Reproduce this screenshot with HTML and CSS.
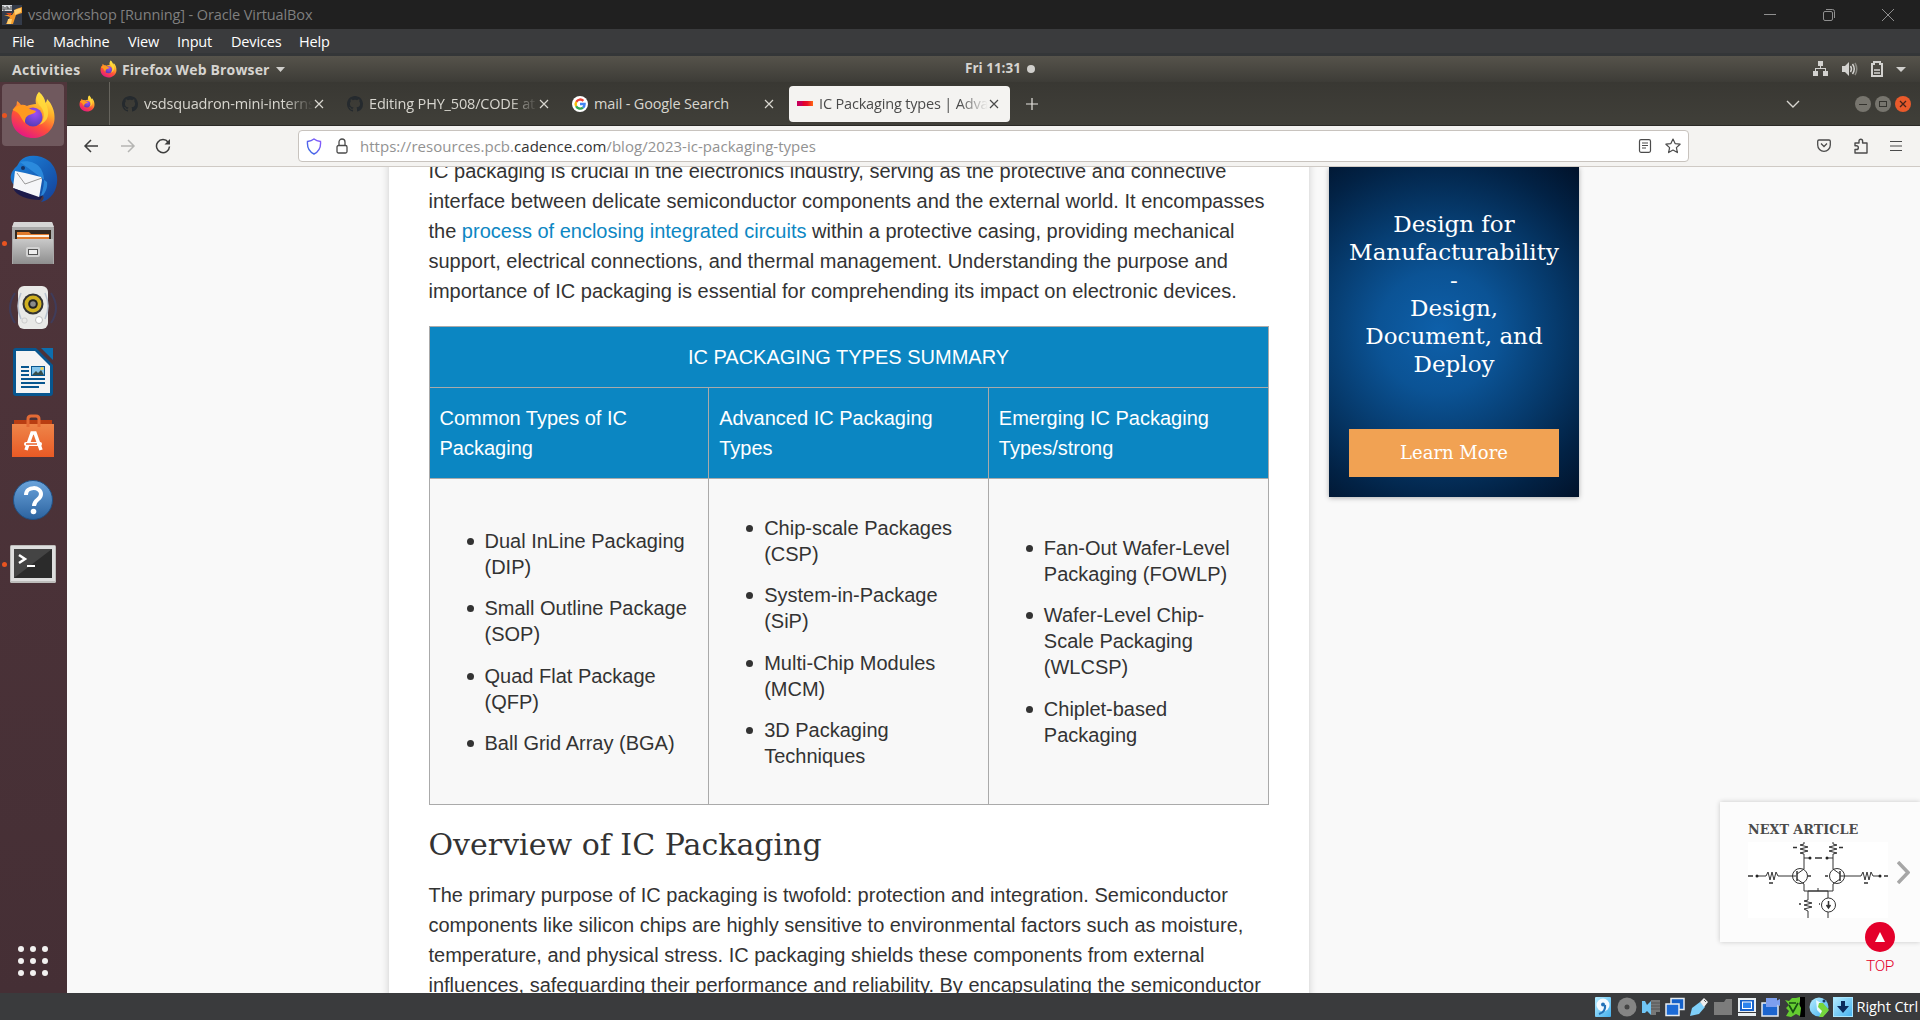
FILE: index.html
```html
<!DOCTYPE html>
<html lang="en">
<head>
<meta charset="utf-8">
<title>vsdworkshop [Running] - Oracle VirtualBox</title>
<link rel="stylesheet" href="styles.css">
</head>
<body>
<svg width="0" height="0" class="defs" aria-hidden="true">
  <defs>
    <linearGradient id="fxBody" x1=".8" y1="0" x2=".3" y2="1"><stop offset="0" stop-color="#fff44f"/><stop offset=".35" stop-color="#ffb02a"/><stop offset=".65" stop-color="#ff5138"/><stop offset="1" stop-color="#e31587"/></linearGradient>
    <radialGradient id="fxGlobe" cx=".6" cy=".3" r=".8"><stop offset="0" stop-color="#a14df5"/><stop offset="1" stop-color="#4a3bb0"/></radialGradient>
    <linearGradient id="tb" x1="0" y1="0" x2="1" y2="1"><stop offset="0" stop-color="#1b87e0"/><stop offset="1" stop-color="#143f96"/></linearGradient>
    <linearGradient id="grey" x1="0" y1="0" x2="0" y2="1"><stop offset="0" stop-color="#c9c9c9"/><stop offset="1" stop-color="#8e8e8e"/></linearGradient>
    <linearGradient id="bag" x1="0" y1="0" x2="0" y2="1"><stop offset="0" stop-color="#ee8549"/><stop offset="1" stop-color="#e95a25"/></linearGradient>
    <linearGradient id="helpg" x1="0" y1="0" x2="0" y2="1"><stop offset="0" stop-color="#6ba4dc"/><stop offset="1" stop-color="#2c639f"/></linearGradient>
    <linearGradient id="cad" x1="0" y1="0" x2="1" y2="0"><stop offset="0" stop-color="#c8005a"/><stop offset=".3" stop-color="#c8005a"/><stop offset=".4" stop-color="#e3002b"/><stop offset=".65" stop-color="#e8102a"/><stop offset="1" stop-color="#ff6a13"/></linearGradient>
    <linearGradient id="shield" x1="0" y1="1" x2="1" y2="0"><stop offset="0" stop-color="#2f6ae0"/><stop offset="1" stop-color="#9059ff"/></linearGradient>
    <linearGradient id="sky" x1="0" y1="0" x2="1" y2="1"><stop offset="0" stop-color="#b5ecff"/><stop offset="1" stop-color="#44b0ee"/></linearGradient>
    <symbol id="firefox" viewBox="0 0 46 48">
      <path d="M29 1c4 3 6 7 6.500 11 1-1 1.500-3 1.500-4 5 5 8 12 7.500 20C44 39 34.500 47 23 47S1.500 38.500 1.500 27c0-6 2-10 5-13l.5-4c2 1 3 3 4 4 2-.5 4 0 6 1 2-1 6-2 9-2-1-4 0-9 3-12z" fill="url(#fxBody)"/>
      <circle cx="23" cy="26" r="9.500" fill="url(#fxGlobe)"/>
      <path d="M2.500 19C6 14 12 13 17 16c2 2 6 3 9 4-1 3-5 3-7 4-4 2-4 5-4 8-5-5-4-10-12.500-13z" fill="#ff9a1f"/>
      <path d="M29 1c-4 6-2 11 2 15 4 5 4 13-2 18 10-3 11-13 7-21-2-4-5-8-7-12z" fill="#ffdc3c" opacity=".8"/>
    </symbol>
    <symbol id="github" viewBox="0 0 16 16"><path fill="#252a2e" d="M8 0C3.580 0 0 3.580 0 8c0 3.540 2.290 6.530 5.470 7.590.4.070.55-.17.550-.38 0-.19-.010-.82-.010-1.490-2.010.37-2.530-.49-2.690-.94-.09-.23-.48-.94-.82-1.130-.28-.15-.68-.52-.010-.53.630-.010 1.080.58 1.230.82.720 1.210 1.870.87 2.330.66.070-.52.280-.87.510-1.070-1.780-.2-3.640-.89-3.640-3.950 0-.87.310-1.590.820-2.150-.08-.2-.36-1.020.080-2.120 0 0 .67-.21 2.200.82.640-.18 1.320-.27 2-.27s1.360.09 2 .27c1.530-1.040 2.200-.82 2.200-.82.440 1.100.160 1.920.080 2.120.510.56.820 1.270.820 2.150 0 3.070-1.870 3.750-3.650 3.950.290.25.540.73.540 1.480 0 1.070-.010 1.930-.010 2.200 0 .21.150.46.550.38A8 8 0 0 0 16 8c0-4.420-3.580-8-8-8z"/></symbol>
    <symbol id="x" viewBox="0 0 10 10"><path d="M1 1l8 8M9 1l-8 8" stroke="currentColor" stroke-width="1.200" fill="none"/></symbol>
  </defs>
</svg>

<header class="titlebar">
  <svg class="vb-icon" width="20" height="20" viewBox="0 0 20 20"><rect width="20" height="20" fill="#343b49"/><path d="M2 10h8l4-6 6-2v6l-6 2-3 9H4l4-7z" fill="#f39a2b"/><path d="M12 5l7-2v4l-6 3zM6 14h4l-1 5H5z" fill="#ffcf70"/><path d="M4 8h6l-2 3z" fill="#d9481c"/><rect width="10" height="6" fill="#d7dadd"/><path d="M1 1v4h2V2m2-1v4m0-2h2v2m2-4v4" stroke="#444" fill="none"/></svg>
  <span class="titlebar-text">vsdworkshop [Running] - Oracle VirtualBox</span>
  <div class="win-buttons">
    <svg width="14" height="14" viewBox="0 0 14 14"><path d="M1 6.500h12" stroke="#8f8f8f"/></svg>
    <svg width="14" height="14" viewBox="0 0 14 14" fill="none" stroke="#8f8f8f"><rect x="1.500" y="3.500" width="9" height="9" rx="1.500"/><path d="M4 1.500h6.500a2 2 0 0 1 2 2V10"/></svg>
    <svg width="14" height="14" viewBox="0 0 14 14" stroke="#8f8f8f"><path d="M1 1l12 12M13 1L1 13"/></svg>
  </div>
</header>
<nav class="menubar"><span class="m1">File</span><span class="m2">Machine</span><span class="m3">View</span><span class="m4">Input</span><span class="m5">Devices</span><span>Help</span></nav>

<div class="gnome-bar">
  <span class="activities">Activities</span>
  <svg width="17" height="18"><use href="#firefox"/></svg>
  <span class="app-name">Firefox Web Browser</span>
  <svg class="app-caret" width="9" height="5" viewBox="0 0 9 5"><path d="M0 0h9L4.500 5z" fill="#d0cfcc"/></svg>
  <span class="clock">Fri 11:31</span><i class="clock-dot"></i>
  <div class="tray">
    <svg width="16" height="16" viewBox="0 0 16 16" fill="#d3d2cf"><path d="M5 0h5v5H8v2h5v3h-1V8H3v2H2V7h5V5H5zM0 10h5v5H0zM10 10h5v5h-5z"/></svg>
    <svg width="16" height="14" viewBox="0 0 16 14"><path d="M0 4h3l4-4v14l-4-4H0z" fill="#d3d2cf"/><path d="M8.500 4q2 3 0 6M10.500 2q3.500 5 0 10" stroke="#d3d2cf" stroke-width="1.500" fill="none"/><path d="M13 1q3.500 6 0 12" stroke="#8a8983" stroke-width="1.500" fill="none"/></svg>
    <svg width="12" height="16" viewBox="0 0 12 16"><path d="M1 15V3h2V1h6v2h2v12z" fill="none" stroke="#d3d2cf" stroke-width="2"/><path d="M3 9h6M3 12h6" stroke="#d3d2cf" stroke-width="1.500"/></svg>
    <svg width="10" height="5" viewBox="0 0 10 5"><path d="M0 0h10L5 5z" fill="#d0cfcc"/></svg>
  </div>
</div>

<main class="desktop">
  <aside class="dock">
    <div class="dock-item active running"><svg width="46" height="48"><use href="#firefox"/></svg></div>
    <div class="dock-item"><svg width="50" height="50" viewBox="0 0 50 50"><path d="M12 7C18 0 32 0 41 7c9 8 11 22 4 33-3 4-7 7-12 8 3-3 3-5 2-6-8 2-22-2-29-11C0 25 3 17 9 12z" fill="url(#tb)"/><path d="M12 8c7-2 17 0 21 7 5 8 3 19-1 29 5-4 8-10 7-16" fill="#2f8fe0" opacity=".85"/><path d="M7 17l10 2 16 4 1 3-3 18L5 34z" fill="#f5f6f8"/><path d="M9 19l8 11 17-6" stroke="#999" fill="none"/><circle cx="15" cy="14" r="2" fill="#163365"/><path d="M5 34l26 9 4-2-3 5C20 46 8 42 5 34z" fill="#1d1b4a"/></svg></div>
    <div class="dock-item running"><svg width="44" height="46" viewBox="0 0 44 46"><path d="M3 2h38l2 6v36H1V8z" fill="#a9a9a9"/><path d="M3 2h38l2 5H1z" fill="#d6d6d6"/><rect x="4" y="10" width="36" height="10" fill="#33281f"/><path d="M6 12h12l2 2h18v6H6z" fill="#e17b2c"/><rect x="6" y="15" width="32" height="2" fill="#fff1df"/><path d="M2 19h40v25H2z" fill="url(#grey)"/><rect x="15" y="27" width="14" height="10" rx="2" fill="#d2d2d2"/><rect x="17.500" y="29.500" width="9" height="5" fill="#eee" stroke="#555"/></svg></div>
    <div class="dock-item"><svg width="50" height="50" viewBox="0 0 50 50" fill="none"><path d="M7 10q-10 15 0 30M43 10q10 15 0 30" stroke="#3f3c5a" stroke-width="2"/><rect x="10" y="3" width="30" height="43" rx="6" fill="#e9e9e7"/><path d="M13 10q-6 13 0 26M37 10q6 13 0 26" stroke="#b9c3d0" stroke-width="1.500"/><circle cx="25" cy="21" r="10.500" fill="#333"/><circle cx="25" cy="21" r="8.500" fill="#d0b020"/><circle cx="25" cy="21" r="4.800" fill="#222"/><circle cx="25" cy="21" r="2.800" fill="#8a8a8a"/><circle cx="31" cy="37" r="3.500" fill="#fff" stroke="#bbb"/><rect x="14" y="35" width="5" height="5" rx="2" stroke="#ccc"/></svg></div>
    <div class="dock-item"><svg width="40" height="48" viewBox="0 0 40 48"><path d="M3 0h20l17 17v28q0 3-3 3H3q-3 0-3-3V3q0-3 3-3z" fill="#07568f"/><path d="M28 0h12v12z" fill="#0d6fae"/><path d="M3 3h19l15 15v27H3z" fill="#f4f4f4"/><path d="M8 19h8M8 23h8M8 27h8M8 31h24M8 35h24M8 39h18" stroke="#07568f" stroke-width="2"/><rect x="18.500" y="18.500" width="13" height="9" fill="#84c4ea" stroke="#07568f"/><path d="M19 27l4-4 2 2 3-3 3 5z" fill="#374d4a"/><circle cx="29" cy="20.500" r="1.500" fill="#f8d24a"/></svg></div>
    <div class="dock-item"><svg width="42" height="44" viewBox="0 0 42 44"><path d="M2 6h38v6H2z" fill="#b93d12"/><path d="M0 10h42v33H0z" fill="url(#bag)"/><path d="M16 13V5q0-3 3-3h5q3 0 3 3v8" fill="none" stroke="#e36a35" stroke-width="3"/><path d="M14 36l6-17h3l6 17" fill="none" stroke="#fff" stroke-width="3.500"/><rect x="12" y="28" width="18" height="4" rx="2" fill="#fff"/><path d="M14 30h11" stroke="#e9632d" stroke-width="1.500"/></svg></div>
    <div class="dock-item"><svg width="42" height="42" viewBox="0 0 42 42"><circle cx="21" cy="21" r="19.500" fill="url(#helpg)" stroke="#205185"/><path d="M14 16c0-9 15-9 15-1 0 6-7 5-7 12" fill="none" stroke="#fff" stroke-width="4"/><circle cx="21.500" cy="32.500" r="2.800" fill="#fff"/></svg></div>
    <div class="dock-item running"><svg width="46" height="38" viewBox="0 0 46 38"><rect width="46" height="38" rx="1.500" fill="#bdbdbb"/><rect x="1" y="1" width="44" height="35" fill="#dedede"/><rect x="4" y="4" width="38" height="29" fill="#2b2b2b"/><path d="M4 4h38L4 33z" fill="#444"/><path d="M9 10l6 4-6 4" stroke="#fff" stroke-width="2.500" fill="none"/><path d="M17 21h8" stroke="#fff" stroke-width="2"/></svg></div>
    <svg class="apps-grid" width="30" height="30" viewBox="0 0 30 30" fill="#f2f1f0"><circle cx="3" cy="3" r="3"/><circle cx="15" cy="3" r="3"/><circle cx="27" cy="3" r="3"/><circle cx="3" cy="15" r="3"/><circle cx="15" cy="15" r="3"/><circle cx="27" cy="15" r="3"/><circle cx="3" cy="27" r="3"/><circle cx="15" cy="27" r="3"/><circle cx="27" cy="27" r="3"/></svg>
  </aside>

  <section class="browser">
    <div class="tabs">
      <div class="pinned"><svg width="16" height="17"><use href="#firefox"/></svg></div>
      <div class="tab t1"><svg width="16" height="16"><use href="#github"/></svg><span class="tab-label">vsdsquadron-mini-internship</span><svg class="close" width="10" height="10"><use href="#x"/></svg></div>
      <div class="tab t2"><svg width="16" height="16"><use href="#github"/></svg><span class="tab-label">Editing PHY_508/CODE at main</span><svg class="close" width="10" height="10"><use href="#x"/></svg></div>
      <div class="tab t3"><svg width="16" height="16" viewBox="0 0 16 16"><circle cx="8" cy="8" r="8" fill="#fff"/><g fill="none" stroke-width="2.400"><path d="M4.300 5.800A4.600 4.600 0 0 1 11.400 4.800" stroke="#ea4335"/><path d="M4.100 10.200A4.600 4.600 0 0 1 4.300 5.800" stroke="#fbbc05"/><path d="M11 11.600A4.600 4.600 0 0 1 4.100 10.200" stroke="#34a853"/><path d="M8 8h4.600A4.600 4.600 0 0 1 11 11.600" stroke="#4285f4"/></g></svg><span class="tab-label">mail - Google Search</span><svg class="close" width="10" height="10"><use href="#x"/></svg></div>
      <div class="tab selected"><svg width="16" height="16" viewBox="0 0 16 16"><rect y="5" width="16" height="5" fill="url(#cad)"/></svg><span class="tab-label">IC Packaging types | Advanced</span><svg class="close" width="10" height="10"><use href="#x"/></svg></div>
      <svg class="new-tab" width="12" height="12" viewBox="0 0 12 12"><path d="M6 0v12M0 6h12" stroke="#e6e4df" stroke-width="1.200"/></svg>
      <svg class="tab-list" width="14" height="8" viewBox="0 0 14 8"><path d="M1 1l6 6 6-6" fill="none" stroke="#d8d6d0" stroke-width="1.400"/></svg>
      <div class="wm"><svg width="16" height="16" viewBox="0 0 16 16"><circle cx="8" cy="8" r="8" fill="#77756e"/><path d="M4 8.500h8" stroke="#34332e"/></svg><svg width="16" height="16" viewBox="0 0 16 16"><circle cx="8" cy="8" r="8" fill="#77756e"/><rect x="4.500" y="5.500" width="7" height="5" fill="none" stroke="#34332e"/></svg><svg width="16" height="16" viewBox="0 0 16 16"><circle cx="8" cy="8" r="8" fill="#ea5a2b"/><path d="M5 5l6 6m0-6l-6 6" stroke="#46231a" stroke-width="1.300"/></svg></div>
    </div>
    <div class="toolbar">
      <svg class="back" width="16" height="14" viewBox="0 0 16 14"><path d="M8 1L2 7l6 6M2 7h13" fill="none" stroke="#3d3d3d" stroke-width="1.500"/></svg>
      <svg class="fwd" width="16" height="14" viewBox="0 0 16 14"><path d="M8 1l6 6-6 6M14 7H1" fill="none" stroke="#b5b5b3" stroke-width="1.500"/></svg>
      <svg class="reload" width="16" height="16" viewBox="0 0 16 16"><path d="M13.200 4.200A6.500 6.500 0 1 0 14.500 8.500" fill="none" stroke="#3d3d3d" stroke-width="1.500"/><path d="M15 1v5.500H9.500z" fill="#3d3d3d"/></svg>
      <div class="urlbar">
        <svg class="shield" width="16" height="17" viewBox="0 0 16 17"><path d="M8 1c2 1.600 4 2.200 6.500 2.500C15 9 13 13.500 8 16 3 13.500 1 9 1.500 3.500 4 3.200 6 2.600 8 1z" fill="none" stroke="url(#shield)" stroke-width="1.400"/></svg>
        <svg class="lock" width="12" height="16" viewBox="0 0 12 16" fill="none" stroke="#4b4b4b" stroke-width="1.300"><rect x="1" y="7.500" width="10" height="7.500" rx="1.500"/><path d="M3 7.500V4a3 3 0 0 1 6 0v3.500"/></svg>
        <span class="url">https://resources.pcb.<b>cadence.com</b>/blog/2023-ic-packaging-types</span>
        <svg class="reader" width="14" height="14" viewBox="0 0 14 14" fill="none" stroke="#4b4b4b" stroke-width="1.200"><rect x="1.500" y=".7" width="11" height="12.600" rx="1.500"/><path d="M4 4h6M4 6.500h6M4 9h4"/></svg>
        <svg class="star" width="16" height="16" viewBox="0 0 16 16" fill="none" stroke="#4b4b4b" stroke-width="1.200" stroke-linejoin="round"><path d="M8 1l2.100 4.600 5 .6-3.700 3.400 1 5L8 12.100l-4.400 2.500 1-5L.9 6.200l5-.6z"/></svg>
      </div>
      <svg class="pocket" width="14" height="14" viewBox="0 0 14 14" fill="none" stroke="#4b4b4b" stroke-width="1.300"><path d="M2 1h10q1.300 0 1.300 1.300V6a6.300 6.300 0 0 1-12.600 0V2.300Q.7 1 2 1z"/><path d="M4 4.500l3 3 3-3"/></svg>
      <svg class="ext" width="16" height="16" viewBox="0 0 16 16" fill="none" stroke="#4b4b4b" stroke-width="1.400" stroke-linejoin="round"><path d="M2 15V11.500h1.500a1.800 1.800 0 0 0 0-3.700H2V5h4V3a1.800 1.800 0 0 1 3.600 0v2H14v10z"/></svg>
      <svg class="burger" width="12" height="12" viewBox="0 0 12 12"><path d="M0 1.500h12M0 6h12M0 10.500h12" stroke="#4b4b4b" stroke-width="1.200"/></svg>
    </div>
    <div class="page">
      <article class="article">
        <p class="intro">IC packaging is crucial in the electronics industry, serving as the protective and connective interface between delicate semiconductor components and the external world. It encompasses the <a>process of enclosing integrated circuits</a> within a protective casing, providing mechanical support, electrical connections, and thermal management. Understanding the purpose and importance of IC packaging is essential for comprehending its impact on electronic devices.</p>
        <table>
          <tr class="summary"><th colspan="3">IC PACKAGING TYPES SUMMARY</th></tr>
          <tr class="kinds"><th>Common Types of IC Packaging</th><th>Advanced IC Packaging Types</th><th>Emerging IC Packaging Types/strong</th></tr>
          <tr class="lists">
            <td><ul><li>Dual InLine Packaging (DIP)</li><li>Small Outline Package (SOP)</li><li>Quad Flat Package (QFP)</li><li>Ball Grid Array (BGA)</li></ul></td>
            <td><ul><li>Chip-scale Packages (CSP)</li><li>System-in-Package (SiP)</li><li>Multi-Chip Modules (MCM)</li><li>3D Packaging Techniques</li></ul></td>
            <td class="emerging"><ul><li>Fan-Out Wafer-Level Packaging (FOWLP)</li><li>Wafer-Level Chip-Scale Packaging (WLCSP)</li><li>Chiplet-based Packaging</li></ul></td>
          </tr>
        </table>
        <h2>Overview of IC Packaging</h2>
        <p>The primary purpose of IC packaging is twofold: protection and integration. Semiconductor components like silicon chips are highly sensitive to environmental factors such as moisture, temperature, and physical stress. IC packaging shields these components from external influences, safeguarding their performance and reliability. By encapsulating the semiconductor</p>
      </article>
      <aside class="promo">
        <div class="promo-title">Design for Manufacturability -<br>Design, Document, and Deploy</div>
        <div class="promo-button">Learn More</div>
      </aside>
      <div class="next">
        <div class="next-body">
          <div class="next-title">NEXT ARTICLE</div>
          <svg width="140" height="76" viewBox="0 0 140 76" fill="none" stroke="#333"><rect width="140" height="76" fill="#fff" stroke="none"/><path d="M56 0v2l-4 1 8 2-8 2 8 2-8 2 4 1v15l-7 5m0 5l7 5v7h29v-7l7-5m0-5l-7-5V12l4-1-8-2 8-2-8-2 8-2-4-1V0M70 46v3H60v9l-4 1 8 2-8 2 8 2-8 2 4 2v9M70 49h10v7m0 14v6M8 34h10l2-4 2 8 2-8 2 8 2-8 2 4h18M92 34h21l2-4 2 8 2-8 2 8 2-8 2 4h8M56 16h5M85 16h-6"/><path d="M49 29v10M92 29v10" stroke-width="1.500"/><circle cx="52" cy="34" r="7.500"/><circle cx="89" cy="34" r="7.500"/><circle cx="80.500" cy="63" r="7"/><path d="M80.500 59v7m-2-3l2 3 2-3M45 5.500h4M91 5.500h4M67 16h7M0 34h5M136 34h4M21 41h4M116 41h4M60 34h3M77 34h3M51 62h2M71 62h1" stroke-width="1.500"/><g fill="#222" stroke="none"><circle cx="62" cy="16" r="1.500"/><circle cx="79" cy="16" r="1.500"/><circle cx="9" cy="34" r="1.500"/><circle cx="132" cy="34" r="1.500"/></g></svg>
        </div>
        <svg class="next-arrow" width="13" height="23" viewBox="0 0 13 23"><path d="M1 1l10 10.500L1 22" fill="none" stroke="#a6a6a6" stroke-width="3.500"/></svg>
      </div>
      <div class="top"><div class="top-circle"><svg width="10" height="10" viewBox="0 0 10 10"><path d="M5 0l5 10H0z" fill="#fff"/></svg></div><span>TOP</span></div>
    </div>
  </section>
</main>

<footer class="status">
  <svg width="20" height="20" viewBox="0 0 20 20"><rect x="2" width="16" height="20" rx="1" fill="url(#sky)"/><circle cx="10" cy="8" r="6.500" fill="#f4faff"/><circle cx="10" cy="7.500" r="2" fill="#2372b8"/><path d="M12 8q1 7-6 9" stroke="#2372b8" stroke-width="2.200" fill="none"/></svg>
  <svg width="20" height="20" viewBox="0 0 20 20"><circle cx="10" cy="10" r="9.500" fill="#858585"/><circle cx="10" cy="10" r="2.500" fill="#444"/></svg>
  <svg width="20" height="20" viewBox="0 0 20 20"><path d="M10 3h9v12h-4v3h-5z" fill="#777"/><path d="M10 6h9m-9 3h9m-9 3h9" stroke="#555"/><path d="M1 4h3l2 4 4-4v14l-4-4-2 2H1z" fill="#6fc5f5"/></svg>
  <svg width="20" height="20" viewBox="0 0 20 20"><rect x="6" y="1.500" width="13" height="11" fill="#1561c9" stroke="#e7edf2" stroke-width="1.500"/><rect x="1" y="7" width="13" height="11.500" fill="#1c6bd6" stroke="#e7edf2" stroke-width="1.500"/></svg>
  <svg width="20" height="20" viewBox="0 0 20 20"><path d="M1 19l2-8 8-6 5 5-6 7z" fill="#7fd0fa"/><path d="M11 5l4-4 4 4-4 5z" fill="#eee"/><path d="M15 3l2 2" stroke="#555"/></svg>
  <svg width="20" height="20" viewBox="0 0 20 20"><path d="M1 5h10l2-3h6v16H1z" fill="#7c7c7c"/></svg>
  <svg width="20" height="20" viewBox="0 0 20 20"><path d="M1 1h18v14H1zM1 16h18v3H1z" fill="#e8eef2"/><rect x="3" y="3" width="14" height="11" fill="#1761c9"/><rect x="5.500" y="5" width="9" height="6.500" fill="#2b83ee" stroke="#fff"/></svg>
  <svg width="20" height="20" viewBox="0 0 20 20"><rect x="1" y="6" width="16" height="13" fill="#1c65cf" stroke="#e7edf2" stroke-width="1.500"/><path d="M5 1h11v9H5zM15 4l4-2v7l-4-2z" fill="#7e9fee"/></svg>
  <svg width="20" height="20" viewBox="0 0 20 20"><path d="M15 0h5v20h-5z" fill="#000"/><path d="M0 3l4 1 3-3h4l4-1v4l-1 3 2 4-1 8-4-2-5 3-5-1 3-5-3-3 3-3z" fill="#65cc31"/><path d="M4 8l4 7 5-9M4 6h7" stroke="#174f13" stroke-width="1.700" fill="none"/></svg>
  <svg width="20" height="20" viewBox="0 0 20 20"><circle cx="10" cy="10" r="9.500" fill="url(#sky)"/><path d="M7 3l5 3-2 3 3 3v6l-5-5z" fill="#e8faff"/><path d="M10 6h4l6 7-6 7h-4l3-6-4-4z" fill="#75d63c"/><circle cx="15" cy="4" r="1.500" fill="#173d66"/></svg>
  <svg width="20" height="20" viewBox="0 0 20 20"><rect x=".5" y=".5" width="19" height="19" fill="url(#sky)" stroke="#a9e6ff"/><path d="M8 4h4v5h4l-6 7-6-7h4z" fill="#0a2a5c"/></svg>
  <span>Right Ctrl</span>
</footer>
</body>
</html>
```
FILE: styles.css
```css
* { box-sizing: border-box; }
body { margin: 0; width: 1920px; height: 1020px; overflow: hidden; display: flex; flex-direction: column; font-family: "Open Sans", "Noto Sans", sans-serif; }
svg { display: block; flex: none; }
.defs { position: absolute; }

.titlebar { height: 29px; background: #202020; display: flex; align-items: center; padding: 0 25px 0 2px; color: #7f7f7f; font-size: 14.5px; }
.titlebar-text { margin-left: 6px; letter-spacing: -0.11px; }
.win-buttons { margin-left: auto; display: flex; gap: 45px; }

.menubar { height: 27px; flex: none; background: #3a3b3d; border-bottom: 3px solid #343638; display: flex; align-items: center; padding-left: 12px; color: #fff; font-size: 14.5px; }
.menubar span { letter-spacing: -0.15px; white-space: nowrap; }
.m1 { width: 41px; } .m2 { width: 75px; } .m3 { width: 49px; } .m4 { width: 54px; } .m5 { width: 68px; }

.gnome-bar { position: relative; height: 26px; flex: none; background: linear-gradient(#56534b, #3d3c37); display: flex; align-items: center; padding-left: 12px; color: #d6d4d0; font-size: 14px; font-weight: 700; letter-spacing: 0.15px; }
.activities { width: 88px; letter-spacing: 0.35px; }
.app-name { margin: 0 6px 0 5px; }
.clock { position: absolute; left: 965px; top: 2px; line-height: 20px; font-size: 13.5px; letter-spacing: 0; }
.clock-dot { position: absolute; left: 1027px; top: 9px; width: 8px; height: 8px; border-radius: 50%; background: #d0cfcc; }
.tray { margin-left: auto; margin-right: 14px; display: flex; align-items: center; gap: 13px; }

.desktop { height: 911px; display: flex; }
.dock { width: 67px; background: linear-gradient(#50353b, #452f35); display: flex; flex-direction: column; align-items: center; padding: 2px 2px 0 0; }
.dock-item { position: relative; width: 62px; height: 62px; margin-bottom: 2.2px; display: flex; align-items: center; justify-content: center; border-radius: 4px; }
.active { background: #70595e; }
.running::before { content: ""; position: absolute; left: 0; top: 29px; width: 5px; height: 5px; border-radius: 50%; background: #e95420; }
.apps-grid { margin: auto 0 17px; }

.browser { width: 1853px; display: flex; flex-direction: column; }
.tabs { height: 44px; flex: none; background: linear-gradient(#393833, #403f39); border-bottom: 1px solid #2b2a27; display: flex; align-items: center; color: #d8d6cf; font-size: 14.5px; }
.pinned { width: 43px; height: 43px; border-right: 1px solid #66645d; display: flex; align-items: center; padding-left: 12px; }
.tab { height: 38px; display: flex; align-items: center; padding: 0 11px 0 8px; width: 221px; border-radius: 4px; }
.t1 { margin-left: 4px; }
.t1, .t2, .t3 { width: 225px; padding-right: 15px; }
.tab-label { margin-left: 6px; flex: 1; overflow: hidden; white-space: nowrap; letter-spacing: -0.17px; mask-image: linear-gradient(90deg, #000 83%, transparent); }
.t3 .tab-label { mask-image: none; }
.tab .close { margin-left: 1px; }
.selected { background: #f4f3f1; color: #4a4a4a; height: 36px; }
.new-tab { margin-left: 16px; }
.tab-list { margin-left: auto; }
.wm { display: flex; gap: 4px; margin: 0 9px 0 55px; }

.toolbar { height: 41px; flex: none; background: #f4f3f1; border-bottom: 1px solid #cfcac5; display: flex; align-items: center; }
.back { margin-left: 16px; } .fwd { margin-left: 21px; } .reload { margin-left: 19px; }
.urlbar { margin-left: 127px; width: 1391px; height: 32px; background: #fff; border: 1px solid #c8c3be; border-radius: 4px; display: flex; align-items: center; padding: 0 7px; color: #929292; font-size: 15px; }
.lock { margin-left: 14px; }
.url { margin-left: 12px; white-space: nowrap; letter-spacing: 0.03px; }
.url b { font-weight: 400; color: #333; }
.reader { margin-left: auto; } .star { margin-left: 13px; }
.pocket { margin-left: 128px; } .ext { margin-left: 22px; } .burger { margin-left: 21px; }

.page { position: relative; flex: 1; overflow: hidden; background: #f9f9f9; display: flex; align-items: flex-start; padding-left: 322px; }
.article { width: 920px; height: 900px; margin-top: -11px; padding: 0 40.5px 0 39.5px; background: #fff; box-shadow: 0 0 8px rgba(0,0,0,.18); color: #333; font: 20px/30px "Liberation Sans", Arial, sans-serif; }
.article p { margin: 0; }
.article a { color: #0d87c3; }
table { width: 840px; margin-top: 20px; border-collapse: collapse; table-layout: fixed; }
th, td { border: 1px solid #aaa; text-align: left; font-weight: 400; padding: 15px 10px; }
th { background: #0b86c2; color: #fff; }
.summary th { text-align: center; }
td { background: #f8f8f8; height: 326px; padding: 1px 10px 0; vertical-align: middle; }
td.emerging { padding: 0 10px 1px; }
ul { margin: 0; padding: 0 8px 0 45px; line-height: 26px; list-style: none; }
li { position: relative; }
li::before { content: ""; position: absolute; left: -18px; top: 10px; width: 7px; height: 7px; border-radius: 50%; background: #333; }
li + li { margin-top: 15.5px; }
h2 { margin: 20px 0 15px; font: 400 30px/40px "DejaVu Serif", serif; }

.promo { width: 250px; height: 330px; margin-left: 20px; padding: 43px 18px 0; background: radial-gradient(circle at 44% 50%, #0e60aa 0, #0b5395 28%, #063a6c 55%, #022245 80%, #01122a 100%); box-shadow: 0 1px 5px rgba(0,0,0,.3); color: #fff; text-align: center; font: 23px/28px "DejaVu Serif", serif; }
.promo-button { margin: 51px 2px 0; height: 48px; background: #f1a253; font-size: 18px; line-height: 47px; }

.next { position: absolute; left: 1653px; top: 635px; width: 200px; height: 140px; background: #fcfcfc; box-shadow: 0 0 5px rgba(0,0,0,.2); display: flex; align-items: center; padding-left: 28px; }
.next-title { font: 700 12.8px/16px "DejaVu Serif", serif; color: #4a4a4a; margin-bottom: 4px; }
.next-body { height: 100px; }
.next-arrow { margin-left: 9px; }
.top { position: absolute; left: 1798px; top: 755px; width: 30px; display: flex; flex-direction: column; align-items: center; color: #e4002b; font: 300 15.5px/18px Roboto, sans-serif; }
.top-circle { width: 30px; height: 30px; border-radius: 50%; background: #e4002b; display: flex; align-items: center; justify-content: center; margin-bottom: 5px; }
.top span { letter-spacing: -0.4px; }

.status { height: 27px; flex: none; background: #3a3b3d; display: flex; align-items: center; justify-content: flex-end; gap: 4px; padding-right: 2px; color: #fff; font-size: 14.5px; letter-spacing: -0.08px; white-space: nowrap; }
```
